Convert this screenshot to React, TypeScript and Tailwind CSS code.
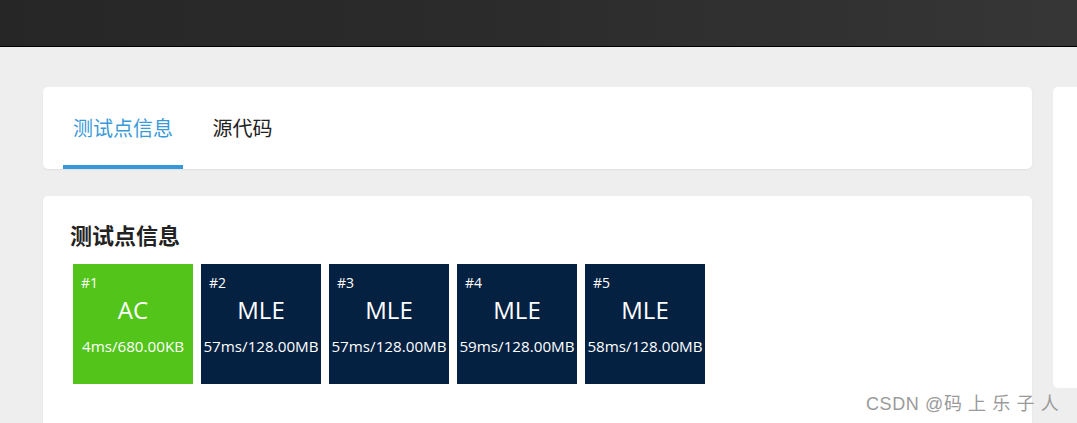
import React from "react";

const tiles = [
  { id: 1, status: "AC", info: "4ms/680.00KB", ok: true },
  { id: 2, status: "MLE", info: "57ms/128.00MB", ok: false },
  { id: 3, status: "MLE", info: "57ms/128.00MB", ok: false },
  { id: 4, status: "MLE", info: "59ms/128.00MB", ok: false },
  { id: 5, status: "MLE", info: "58ms/128.00MB", ok: false },
];

export default function App() {
  return (
    <div
      className="w-[1077px] h-[423px] overflow-hidden bg-[#eeeeee] relative"
      style={{ fontFamily: '"Open Sans", "Noto Sans CJK SC", sans-serif' }}
    >
      <div className="h-[46px] bg-gradient-to-r from-[#262626] via-[#2c2c2c] to-[#363636] border-b border-black box-content" />
      <div className="flex gap-[21px] pl-[43px] pt-[40px]">
        <div className="w-[989px] flex flex-col gap-[27px] shrink-0">
          <div className="h-[82px] bg-white rounded-[5px] shadow-[0_1px_2px_rgba(0,0,0,0.06)] flex items-end px-[20px]">
            <div className="flex">
              <div className="w-[120px] h-[82px] flex flex-col items-center">
                <div className="flex-1 flex items-center text-[20px] text-[#3a9ad9] pt-[5px]">测试点信息</div>
                <div className="w-full h-[4px] bg-[#3498db]" />
              </div>
              <div className="w-[120px] h-[82px] flex flex-col items-center">
                <div className="flex-1 flex items-center text-[20px] text-[#222] pt-[5px] pr-[1px]">源代码</div>
                <div className="w-full h-[4px]" />
              </div>
            </div>
          </div>
          <div className="h-[240px] bg-white rounded-[5px] shadow-[0_1px_2px_rgba(0,0,0,0.06)] pl-[27px] pt-[24px]">
            <div className="text-[22px] font-bold text-[#222] leading-[30px]">测试点信息</div>
            <div className="flex gap-[8px] mt-[14px] ml-[3px]">
              {tiles.map((t) => (
                <div
                  key={t.id}
                  className={`w-[120px] h-[120px] text-white flex flex-col ${t.ok ? "bg-[#52c41a]" : "bg-[#052142]"}`}
                >
                  <div className="text-[14px] leading-[14px] pl-[8px] pt-[12px]">#{t.id}</div>
                  <div className="text-[24px] leading-[30px] text-center mt-[5px]">{t.status}</div>
                  <div className="text-[15.2px] leading-[20px] text-center mt-[11px] whitespace-nowrap">{t.info}</div>
                </div>
              ))}
            </div>
          </div>
        </div>
        <div className="w-[40px] h-[301px] bg-white rounded-l-[5px] shrink-0" />
      </div>
      <div
        className="absolute left-[866px] top-[391px] text-[18px] text-[#9a9a9a] tracking-[0.6px]"
        style={{ fontFamily: '"Liberation Sans", "Noto Sans CJK SC", sans-serif' }}
      >
        CSDN @码 上 乐 子 人
      </div>
    </div>
  );
}
